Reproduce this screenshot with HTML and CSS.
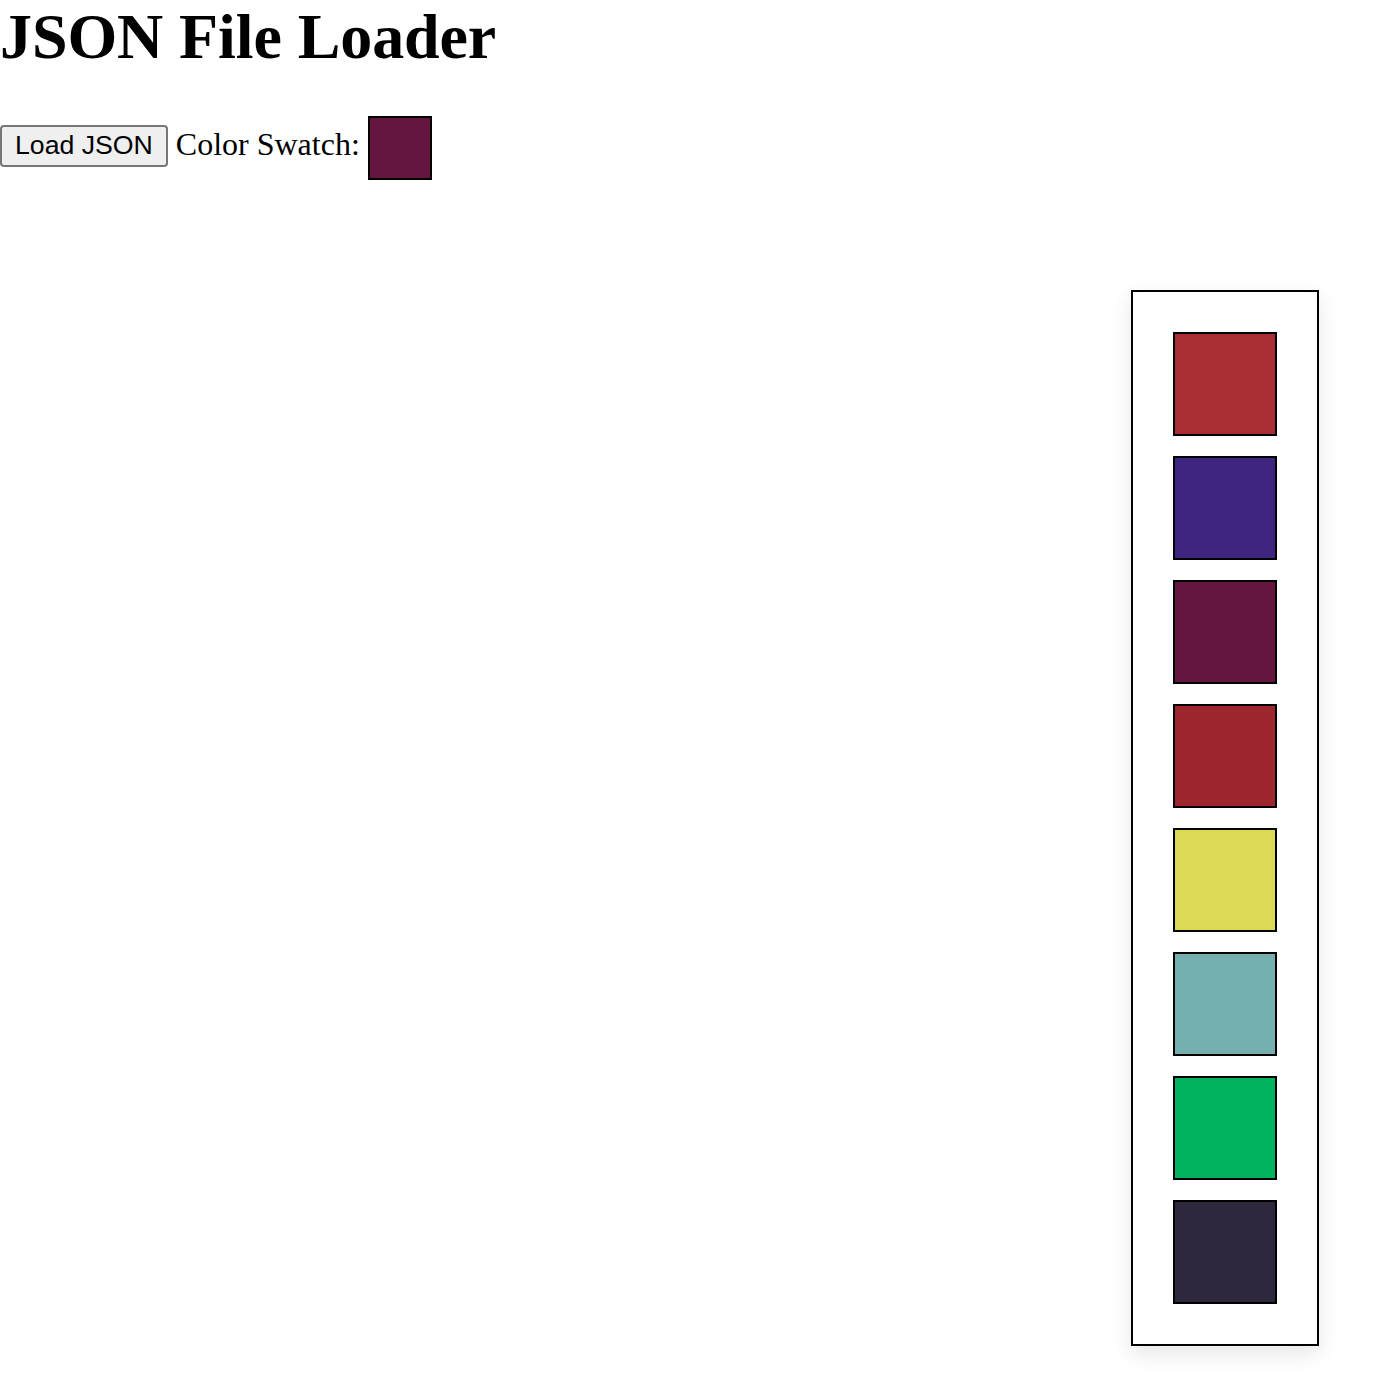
FILE: index.html
```html
<!DOCTYPE html>
<html>
<head>
<meta charset="utf-8">
<title>JSON File Loader</title>
<link rel="stylesheet" href="styles.css">
</head>
<body>
<h1 class="title">JSON File Loader</h1>
<div class="controls">
  <button class="load-btn">Load JSON</button>
  <span class="label">Color Swatch:</span>
  <span class="swatch current"></span>
</div>
<div class="palette">
  <div class="swatch big c1"></div>
  <div class="swatch big c2"></div>
  <div class="swatch big c3"></div>
  <div class="swatch big c4"></div>
  <div class="swatch big c5"></div>
  <div class="swatch big c6"></div>
  <div class="swatch big c7"></div>
  <div class="swatch big c8"></div>
</div>
</body>
</html>
```

FILE: styles.css
```css
html, body {
  margin: 0;
  padding: 0;
  background: #ffffff;
}
body {
  font-family: "Liberation Serif", "Times New Roman", serif;
  font-size: 32px;
  color: #000;
  position: relative;
  min-height: 1382px;
}
.title {
  font-family: "Liberation Serif", "Times New Roman", serif;
  font-size: 64px;
  font-weight: bold;
  line-height: normal;
  letter-spacing: -0.1px;
  margin: 0 0 42px 0;
}
.controls {
  line-height: normal;
}
.load-btn {
  font-family: "Liberation Sans", Arial, sans-serif;
  font-size: 26.67px;
  color: #000;
  background: #efefef;
  border: 2px solid #767676;
  border-radius: 4px;
  height: 42px;
  padding: 0 13px;
  margin: 0;
  vertical-align: 1px;
  box-sizing: border-box;
}
.label {
  vertical-align: baseline;
}
.swatch {
  display: inline-block;
  box-sizing: border-box;
  border: 2px solid #000;
  vertical-align: middle;
}
.current {
  width: 64px;
  height: 64px;
  background: #641540;
}
.palette {
  position: absolute;
  top: 290px;
  right: 70px;
  width: 188px;
  box-sizing: border-box;
  border: 2px solid #000;
  background: #fff;
  padding: 40px;
  display: flex;
  flex-direction: column;
  gap: 20px;
  box-shadow: 0 8px 20px rgba(0, 0, 0, 0.1);
}
.big {
  display: block;
  width: 104px;
  height: 104px;
}
.c1 { background: #a83034; }
.c2 { background: #3f2580; }
.c3 { background: #641540; }
.c4 { background: #9e272e; }
.c5 { background: #dbd955; }
.c6 { background: #75b0b1; }
.c7 { background: #00b25d; }
.c8 { background: #2d283d; }
```
